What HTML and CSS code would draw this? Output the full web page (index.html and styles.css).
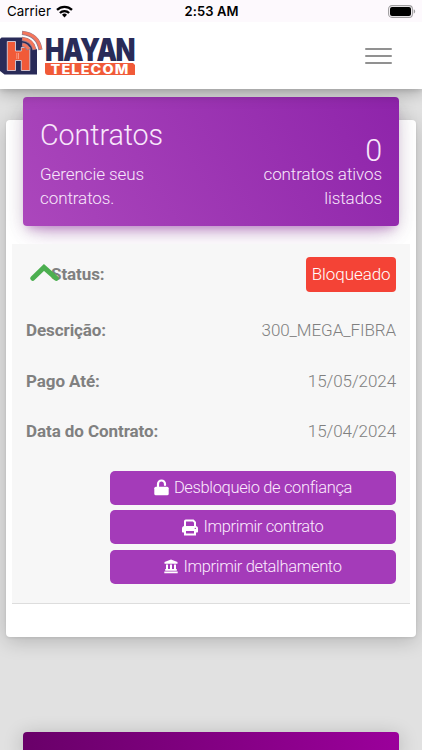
FILE: index.html
```html
<!DOCTYPE html>
<html lang="pt-BR">
<head>
<meta charset="utf-8">
<title>Contratos</title>
<link rel="stylesheet" href="styles.css">
</head>
<body>
<div class="statusbar">
  <div class="carrier"><span>Carrier</span>
    <svg width="17" height="13" viewBox="0 0 17 13"><g fill="none" stroke="#000" stroke-width="2.3"><path d="M1 4.9a10.8 10.8 0 0 1 15 0"/><path d="M3.9 8a6.6 6.6 0 0 1 9.2 0"/></g><path d="M8.5 12.4 6 9.8a3.6 3.6 0 0 1 5 0z"/></svg>
  </div>
  <div class="clock">2:53 AM</div>
  <svg class="battery" width="28" height="13" viewBox="0 0 28 13"><rect x=".6" y=".6" width="23.8" height="11.8" rx="3.4" fill="none" stroke="#a09ea0" stroke-width="1.1"/><rect x="2" y="2" width="21" height="9" rx="2"/><path d="M25.7 4.3v4.400q1.500-.6 1.500-2.200t-1.500-2.200z" fill="#a09ea0"/></svg>
</div>
<header class="navbar">
  <svg class="logo" width="136" height="48" viewBox="0 0 136 48">
    <path d="M1.500 7.500H23l14 12V44.500H4.500L0 41V9z" fill="#292b58"/>
    <path d="M7.300 11.500h8.200V21h5.800v-3.500h8.500v23h-8.500V30.500h-5.800v10H7.300z" fill="#f15a38" stroke="#d9cfda" stroke-width=".9"/>
    <path d="M16.800 23v6M18.500 23v6" stroke="#f9b5a4" stroke-width=".7"/>
    <g fill="none" stroke="#8c7b91" stroke-width="4.200"><path d="M22 2.800q16 1.500 18.500 17"/><path d="M22 8.800q10.500 1 12.500 11"/><path d="M22 14.600q5 .5 6.500 5.200"/></g>
    <g fill="none" stroke="#f4765b" stroke-width="2.900"><path d="M22.500 2.800q15.500 1.500 18 16.500"/><path d="M22.500 8.800q10 1 12 10.500"/><path d="M22.500 14.600q4.500.5 6 4.700"/></g>
    <text class="brand" x="45" y="30.800" textLength="89" lengthAdjust="spacingAndGlyphs">HAYAN</text>
    <path d="M45 33h88l2 2v10H48q-3 0-3-3z" fill="#f15a38"/>
    <text class="subbrand" x="50.500" y="43.500" textLength="79" lengthAdjust="spacingAndGlyphs">TELECOM</text>
  </svg>
  <div class="burger"><i></i><i></i><i></i></div>
</header>
<main class="page">
  <section class="card">
    <div class="banner">
      <div class="intro"><h1>Contratos</h1><p>Gerencie seus contratos.</p></div>
      <div class="count"><strong>0</strong><p>contratos ativos listados</p></div>
    </div>
    <div class="contract">
      <div class="row first"><b>Status:</b><span class="badge">Bloqueado</span>
        <svg class="chevron" width="30" height="19" viewBox="0 0 30 19"><path d="M2.800 15.300 14 4.500l12.300 10.800" fill="none" stroke="#4caf50" stroke-width="5" stroke-linecap="round"/></svg>
      </div>
      <div class="row"><b>Descrição:</b><span>300_MEGA_FIBRA</span></div>
      <div class="row"><b>Pago Até:</b><span>15/05/2024</span></div>
      <div class="row"><b>Data do Contrato:</b><span>15/04/2024</span></div>
      <div class="actions">
        <button><svg width="15" height="17" viewBox="0 0 15 17"><path d="M4 8V5a3.500 3.500 0 0 1 7 0v1" fill="none" stroke="#fff" stroke-width="2.200" stroke-linecap="round"/><rect x=".3" y="7.700" width="14.400" height="8.600" rx="1.600" fill="#fff"/></svg><span>Desbloqueio de confiança</span></button>
        <button><svg width="16" height="17" viewBox="0 0 16 17"><path d="M3 7.500V2.300q0-.8.8-.8h7.400L13 3.300v4.200" fill="none" stroke="#fff" stroke-width="2"/><path d="M2.500 7h11Q16 7 16 9.500v3.200q0 .8-.8.800H.8q-.8 0-.8-.8V9.500Q0 7 2.500 7z" fill="#fff"/><path d="M3 11h10v4.500H3z" fill="#a43bb9" stroke="#fff" stroke-width="2"/><circle cx="13.300" cy="9.400" r=".7" fill="#a43bb9"/></svg><span>Imprimir contrato</span></button>
        <button><svg width="14" height="15" viewBox="0 0 14 15"><path d="M7 .5 13.500 3v1.800H.5V3zM2 5.500h2v5H2zM6 5.500h2v5H6zM10 5.500h2v5h-2zM1.200 10h11.600v1.700H1.200zM.3 12.600h13.400v1.700H.3z" fill="#fff"/></svg><span>Imprimir detalhamento</span></button>
      </div>
    </div>
  </section>
  <section class="next"></section>
</main>
</body>
</html>
```
FILE: styles.css
```css
* { box-sizing: border-box; }
body { margin: 0; width: 422px; height: 750px; overflow: hidden; background: #e1e1e1; font: 300 17px/24px Roboto, sans-serif; letter-spacing: -.08px; color: #808080; }
h1, p { margin: 0; font-weight: 300; }
svg { flex: none; }
.statusbar { display: grid; grid-template-columns: 1fr auto 1fr; align-items: center; height: 22px; padding: 0 6px 0 7px; background: #fdf9fd; color: #000; font: 400 13.3px/22px Inter, sans-serif; position: relative; z-index: 3; }
.carrier { display: flex; align-items: center; gap: 5px; letter-spacing: .05px; }
.clock { font-weight: 600; font-size: 13px; letter-spacing: .1px; }
.battery { justify-self: end; }
.navbar { display: flex; justify-content: space-between; height: 67px; padding: 8px 30px 0 0; background: #fff; position: relative; z-index: 2; box-shadow: 0 4px 14px rgba(0,0,0,.26), 0 2px 4px rgba(0,0,0,.08); }
.logo { overflow: visible; }
.brand { font: 900 31.500px Inter, sans-serif; letter-spacing: -1.800px; fill: #292b58; }
.subbrand { font: 800 12.500px Inter, sans-serif; letter-spacing: 1px; fill: #fff; }
.burger { display: flex; flex-direction: column; gap: 5px; padding-top: 17.500px; }
.burger i { width: 27px; height: 2px; border-radius: 1px; background: #919191; }
.page { padding: 31px 6px 0; }
.card { height: 517px; padding: 0 6px; background: #fff; border-radius: 4px; box-shadow: 0 4px 20px rgba(0,0,0,.2), 0 1px 3px rgba(0,0,0,.08); display: flow-root; }
.banner { display: flex; justify-content: space-between; height: 129px; margin: -23px 11px 0; padding: 22px 17px 0; border-radius: 4px; background: linear-gradient(60deg, #ab47bc, #8e24aa); color: #f8e7fb; box-shadow: 0 12px 20px -10px rgba(156,39,176,.4), 0 4px 20px rgba(0,0,0,.14), 0 7px 8px -5px rgba(156,39,176,.3); }
.intro { width: 125px; }
.intro h1 { font-size: 28.700px; line-height: 32px; margin-bottom: 11px; }
.count { width: 130px; text-align: right; padding-top: 20px; }
.count strong { display: block; font-size: 30.500px; line-height: 23px; font-weight: 300; }
.contract { height: 360px; margin-top: 17.500px; padding: 0 14px; background: #f7f7f7; border-bottom: 1.500px solid #ddd; }
.row { display: flex; justify-content: space-between; align-items: center; height: 50.700px; }
.row b { font-weight: 700; }
.row.first { height: 61px; position: relative; }
.first b { padding-left: 25px; }
.badge { height: 35px; padding: 5px 5.500px; line-height: 24px; background: #f44336; border-radius: 4px; color: #fff; }
.chevron { position: absolute; left: 4px; top: 19px; }
.actions { display: flex; flex-direction: column; gap: 5.500px; padding: 14px 0 0 84px; }
button { display: flex; justify-content: center; align-items: center; gap: 5px; height: 34px; padding: 0; border: 0; border-radius: 5px; background: #a43bb9; color: #fbeafd; font: inherit; font-size: 16.500px; letter-spacing: -.35px; }
.next { height: 18px; margin: 95px 17px 0; border-radius: 4px 4px 0 0; background: linear-gradient(90deg, #690069, #9b009b); box-shadow: 0 4px 20px rgba(0,0,0,.24); }
```
